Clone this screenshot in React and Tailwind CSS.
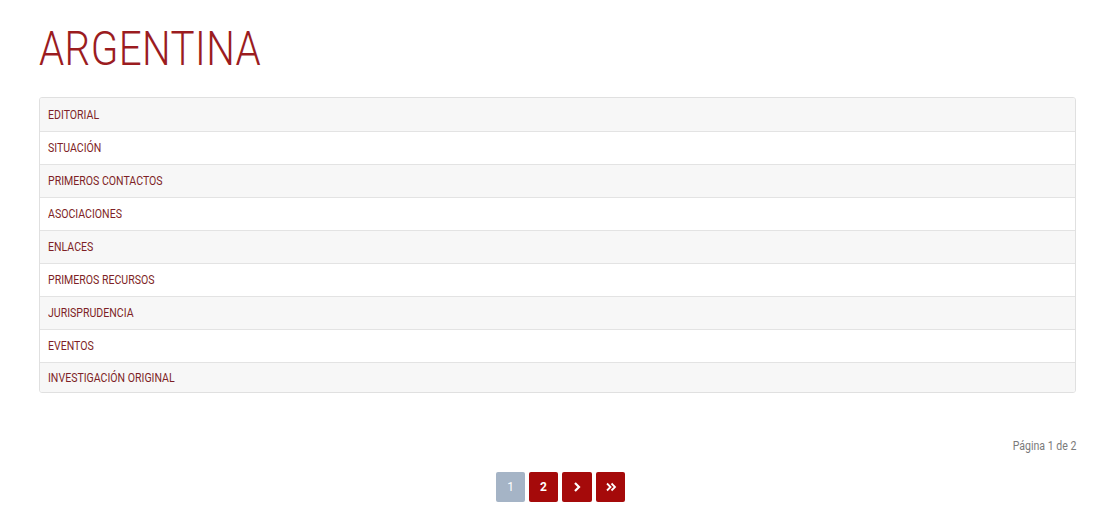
import React from 'react'

const SECTIONS = [
  'EDITORIAL',
  'SITUACIÓN',
  'PRIMEROS CONTACTOS',
  'ASOCIACIONES',
  'ENLACES',
  'PRIMEROS RECURSOS',
  'JURISPRUDENCIA',
  'EVENTOS',
  'INVESTIGACIÓN ORIGINAL',
]

export default function App() {
  return (
    <div className="min-h-[524px] bg-white px-[39px] pt-[21px] font-['Roboto',sans-serif]">
      <h1 className="text-[48px] font-light leading-[56px] tracking-[0.5px] text-[#9b1c1f] [transform:scaleX(0.84)] origin-left">
        ARGENTINA
      </h1>

      {/* Section list */}
      <div className="mt-[20px] w-[1037px] overflow-hidden rounded-[3px] border border-[#e0e0e0]">
        {SECTIONS.map((name, i) => (
          <div
            key={name}
            className={`flex ${i === SECTIONS.length - 1 ? 'h-[30px]' : 'h-[33px]'} items-center px-[8px] ${i > 0 ? 'border-t border-[#e3e3e3]' : ''} ${i % 2 === 0 ? 'bg-[#f7f7f7]' : 'bg-white'}`}
          >
            <span className="inline-block origin-left whitespace-nowrap text-[12px] font-normal text-[#7e1f26] [transform:scaleX(0.88)]">
              {name}
            </span>
          </div>
        ))}
      </div>

      <div className="mt-[44px] flex w-[1037px] justify-end">
        <span className="inline-block origin-right text-[12px] text-[#7a7a7a] [transform:scaleX(0.88)]">Página 1 de 2</span>
      </div>

      {/* Pagination */}
      <div className="mt-[17px] flex w-[1037px] justify-center gap-[4px] pl-[6px]">
        <span className="flex h-[30px] w-[29px] items-center justify-center rounded-[2px] bg-[#a5b4c6] text-[12px] font-normal text-white">1</span>
        <span className="flex h-[30px] w-[29px] items-center justify-center rounded-[2px] bg-[#a50a0a] text-[12px] font-bold text-white">2</span>
        <span className="flex h-[30px] w-[30px] items-center justify-center rounded-[2px] bg-[#a50a0a] text-white">
          <svg width="10" height="12" viewBox="0 0 10 12" fill="none" stroke="white" strokeWidth="2.2">
            <path d="M3 2l4 4-4 4" />
          </svg>
        </span>
        <span className="flex h-[30px] w-[29px] items-center justify-center rounded-[2px] bg-[#a50a0a] text-white">
          <svg width="12" height="12" viewBox="0 0 12 12" fill="none" stroke="white" strokeWidth="1.8">
            <path d="M2 2.5l3.5 3.5L2 9.5M6.5 2.5L10 6l-3.5 3.5" />
          </svg>
        </span>
      </div>
    </div>
  )
}
